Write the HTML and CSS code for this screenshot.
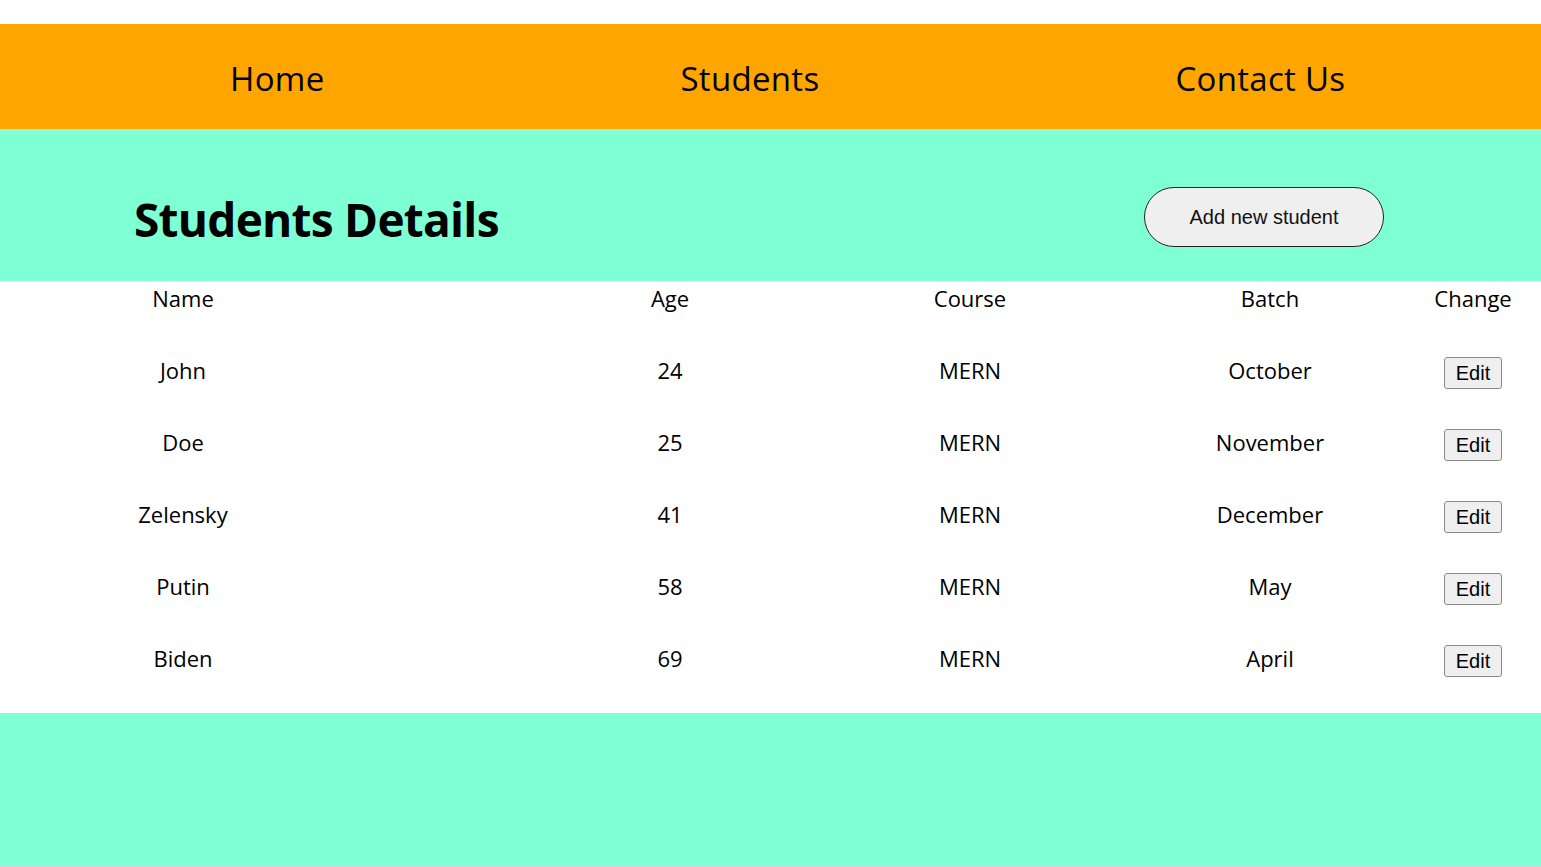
FILE: index.html
```html
<!DOCTYPE html>
<html>
<head>
<meta charset="utf-8">
<link rel="stylesheet" href="styles.css">
</head>
<body>
<nav class="nav">
  <a class="nav-link">Home</a>
  <a class="nav-link">Students</a>
  <a class="nav-link">Contact Us</a>
</nav>
<section class="hero">
  <h1 class="title">Students Details</h1>
  <button class="add-btn">Add new student</button>
</section>
<section class="table">
  <div class="row">
    <div class="cell c-name">Name</div>
    <div class="cell c-age">Age</div>
    <div class="cell c-course">Course</div>
    <div class="cell c-batch">Batch</div>
    <div class="cell c-change">Change</div>
  </div>
  <div class="row">
    <div class="cell c-name">John</div>
    <div class="cell c-age">24</div>
    <div class="cell c-course">MERN</div>
    <div class="cell c-batch">October</div>
    <div class="cell c-change"><button class="edit-btn">Edit</button></div>
  </div>
  <div class="row">
    <div class="cell c-name">Doe</div>
    <div class="cell c-age">25</div>
    <div class="cell c-course">MERN</div>
    <div class="cell c-batch">November</div>
    <div class="cell c-change"><button class="edit-btn">Edit</button></div>
  </div>
  <div class="row">
    <div class="cell c-name">Zelensky</div>
    <div class="cell c-age">41</div>
    <div class="cell c-course">MERN</div>
    <div class="cell c-batch">December</div>
    <div class="cell c-change"><button class="edit-btn">Edit</button></div>
  </div>
  <div class="row">
    <div class="cell c-name">Putin</div>
    <div class="cell c-age">58</div>
    <div class="cell c-course">MERN</div>
    <div class="cell c-batch">May</div>
    <div class="cell c-change"><button class="edit-btn">Edit</button></div>
  </div>
  <div class="row">
    <div class="cell c-name">Biden</div>
    <div class="cell c-age">69</div>
    <div class="cell c-course">MERN</div>
    <div class="cell c-batch">April</div>
    <div class="cell c-change"><button class="edit-btn">Edit</button></div>
  </div>
</section>
<footer class="footer"></footer>
</body>
</html>
```
FILE: styles.css
```css
html, body {
  margin: 0;
  padding: 0;
  background: #ffffff;
  overflow: hidden;
}
body {
  font-family: "Open Sans", "Noto Sans", sans-serif;
  color: #000;
  padding-top: 24px;
}
.nav {
  height: 105px;
  background: #ffa500;
  display: flex;
  align-items: center;
  padding-left: 230px;
  gap: 356px;
  box-sizing: border-box;
}
.nav-link {
  font-size: 33px;
  line-height: 40px;
  color: #000;
  padding-top: 4px;
  letter-spacing: 0.3px;
}
.hero {
  height: 152px;
  background: #7fffd4;
  display: flex;
  align-items: center;
  padding-left: 134px;
  padding-right: 157px;
  justify-content: space-between;
  box-sizing: border-box;
}
.title {
  margin: 0;
  font-size: 46px;
  font-weight: 700;
  line-height: 56px;
  padding-top: 28px;
  letter-spacing: -0.75px;
}
.add-btn {
  width: 240px;
  height: 60px;
  border: 1px solid #222;
  border-radius: 30px;
  background: #efefef;
  font-family: "Liberation Sans", Arial, sans-serif;
  font-size: 20px;
  color: #111;
  margin-top: 24px;
}
.table {
  background: #fff;
}
.row {
  display: flex;
  height: 72px;
  align-items: flex-start;
}
.cell {
  text-align: center;
  font-size: 22px;
  line-height: 36px;
  margin-top: -1px;
}
.c-name { width: 240px; margin-left: 63px; }
.c-age { width: 160px; margin-left: 287px; }
.c-course { width: 160px; margin-left: 140px; }
.c-batch { width: 160px; margin-left: 140px; }
.c-change { width: 120px; margin-left: 63px; }
.edit-btn {
  font-family: "Liberation Sans", Arial, sans-serif;
  font-size: 20px;
  line-height: 24px;
  padding: 3px 11px;
  border: 1px solid #8a8a8a;
  border-radius: 3px;
  background: #efefef;
  color: #000;
  margin-top: 5px;
}
.footer {
  height: 152px;
  background: #7fffd4;
  border-bottom: 2px solid #d2d4d8;
}
```
